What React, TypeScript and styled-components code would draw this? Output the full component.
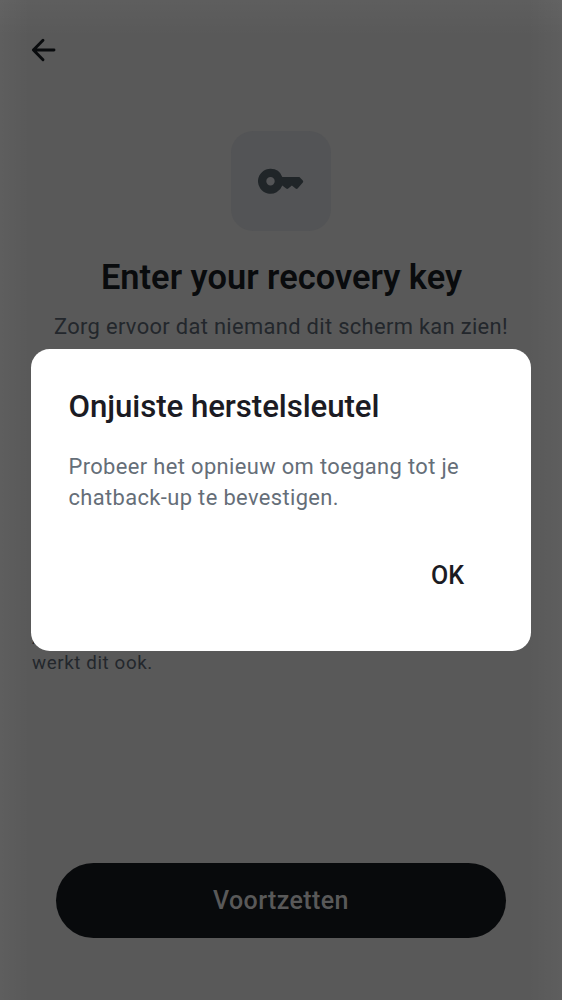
import React from 'react';
import styled, { createGlobalStyle } from 'styled-components';

const GlobalStyle = createGlobalStyle`
  *, *::before, *::after { box-sizing: border-box; }
  body {
    margin: 0;
    font-family: Roboto, 'Liberation Sans', sans-serif;
    background: #595959;
  }
  h1, h2, p { margin: 0; font-weight: 400; }
  button { font: inherit; border: 0; background: none; padding: 0; cursor: pointer; }
`;

const Screen = styled.main`
  position: relative;
  display: flex;
  flex-direction: column;
  height: 1000px;
  overflow: hidden;
  background:
    linear-gradient(to bottom, rgba(255, 255, 255, 0.03), rgba(255, 255, 255, 0) 36px),
    linear-gradient(to right, rgba(255, 255, 255, 0.03), rgba(255, 255, 255, 0) 30px,
      rgba(255, 255, 255, 0) calc(100% - 34px), rgba(255, 255, 255, 0.03)),
    #595959;
`;

const TopBar = styled.header`
  display: flex;
  align-items: center;
  height: 100px;
  padding-left: 25px;
`;

const BackButton = styled.button`
  display: flex;
  width: 38px;
  height: 38px;
`;

const Intro = styled.section`
  display: flex;
  flex-direction: column;
  align-items: center;
  padding-top: 31px;
`;

const KeyTile = styled.div`
  display: flex;
  align-items: center;
  justify-content: center;
  width: 100px;
  height: 100px;
  border-radius: 22px;
  background: #535456;
`;

const Title = styled.h1`
  margin-top: 24px;
  padding-left: 1px;
  font-size: 34.4px;
  line-height: 44px;
  font-weight: 600;
  letter-spacing: 0.02px;
  white-space: nowrap;
  color: #090b0d;
`;

const Subtitle = styled.p`
  margin-top: 12px;
  font-size: 21.9px;
  line-height: 31px;
  letter-spacing: 0.33px;
  white-space: nowrap;
  color: #23272c;
`;

const Hint = styled.p`
  margin-top: 284px;
  padding: 0 32px;
  font-size: 18.75px;
  line-height: 25px;
  letter-spacing: 0.6px;
  color: #23272c;
`;

const Footer = styled.footer`
  margin-top: auto;
  padding: 0 56px 62.5px;
`;

const ContinueButton = styled.button`
  display: block;
  width: 100%;
  height: 75px;
  border-radius: 38px;
  background: #080a0c;
  color: #595959;
  font-size: 25px;
  font-weight: 500;
  letter-spacing: 0.4px;
`;

const Overlay = styled.div`
  position: absolute;
  inset: 0;
  display: flex;
  align-items: center;
  justify-content: center;
`;

const Dialog = styled.div`
  display: flex;
  flex-direction: column;
  width: 500px;
  height: 301.5px;
  padding: 37px 37.5px;
  border-radius: 18.75px;
  background: #fff;
`;

const DialogTitle = styled.h2`
  font-size: 31.25px;
  line-height: 41px;
  font-weight: 500;
  letter-spacing: -0.08px;
  color: #1b1b23;
`;

const DialogText = styled.p`
  margin-top: 24px;
  font-size: 21.9px;
  line-height: 31px;
  letter-spacing: 0.37px;
  color: #656e78;
`;

const DialogActions = styled.div`
  display: flex;
  justify-content: flex-end;
  margin-top: 31.5px;
  padding-right: 10px;
`;

const DialogButton = styled.button`
  width: 72px;
  height: 62px;
  color: #1b1b23;
  font-size: 25px;
  font-weight: 500;
`;

function BackIcon() {
  return (
    <svg width="38" height="38" viewBox="0 0 38 38" fill="none" stroke="#090b0d" strokeWidth="2.9" strokeLinecap="round" strokeLinejoin="round">
      <path d="M29 19H8.4M18 9.2L8.4 19l9.6 9.8" />
    </svg>
  );
}

function KeyIcon() {
  return (
    <svg width="46" height="26" viewBox="0 0 46 26">
      <path
        fill="#202528"
        fillRule="evenodd"
        d="M12.5 .8a12.5 12.5 0 1 0 11.8 16.6l3.9 3.2q1 .8 2 0l3.7-3.2 3.7 3.2q1 .8 2 0l5-5.8q1.2-1.3 0-2.6l-3.2-3.3H24.3A12.5 12.5 0 0 0 12.5 .8Zm0 8.3a4.2 4.2 0 1 0 0 8.4 4.2 4.2 0 0 0 0-8.4Z"
      />
    </svg>
  );
}

export default function App() {
  return (
    <>
      <GlobalStyle />
      <Screen>
        <TopBar>
          <BackButton aria-label="Terug"><BackIcon /></BackButton>
        </TopBar>
        <Intro>
          <KeyTile><KeyIcon /></KeyTile>
          <Title>Enter your recovery key</Title>
          <Subtitle>Zorg ervoor dat niemand dit scherm kan zien!</Subtitle>
        </Intro>
        <Hint>
          Als je een herstelwachtwoord hebt,<br />werkt dit ook.
        </Hint>
        <Footer>
          <ContinueButton>Voortzetten</ContinueButton>
        </Footer>
        <Overlay>
          <Dialog role="alertdialog">
            <DialogTitle>Onjuiste herstelsleutel</DialogTitle>
            <DialogText>Probeer het opnieuw om toegang tot je chatback-up te bevestigen.</DialogText>
            <DialogActions>
              <DialogButton>OK</DialogButton>
            </DialogActions>
          </Dialog>
        </Overlay>
      </Screen>
    </>
  );
}
